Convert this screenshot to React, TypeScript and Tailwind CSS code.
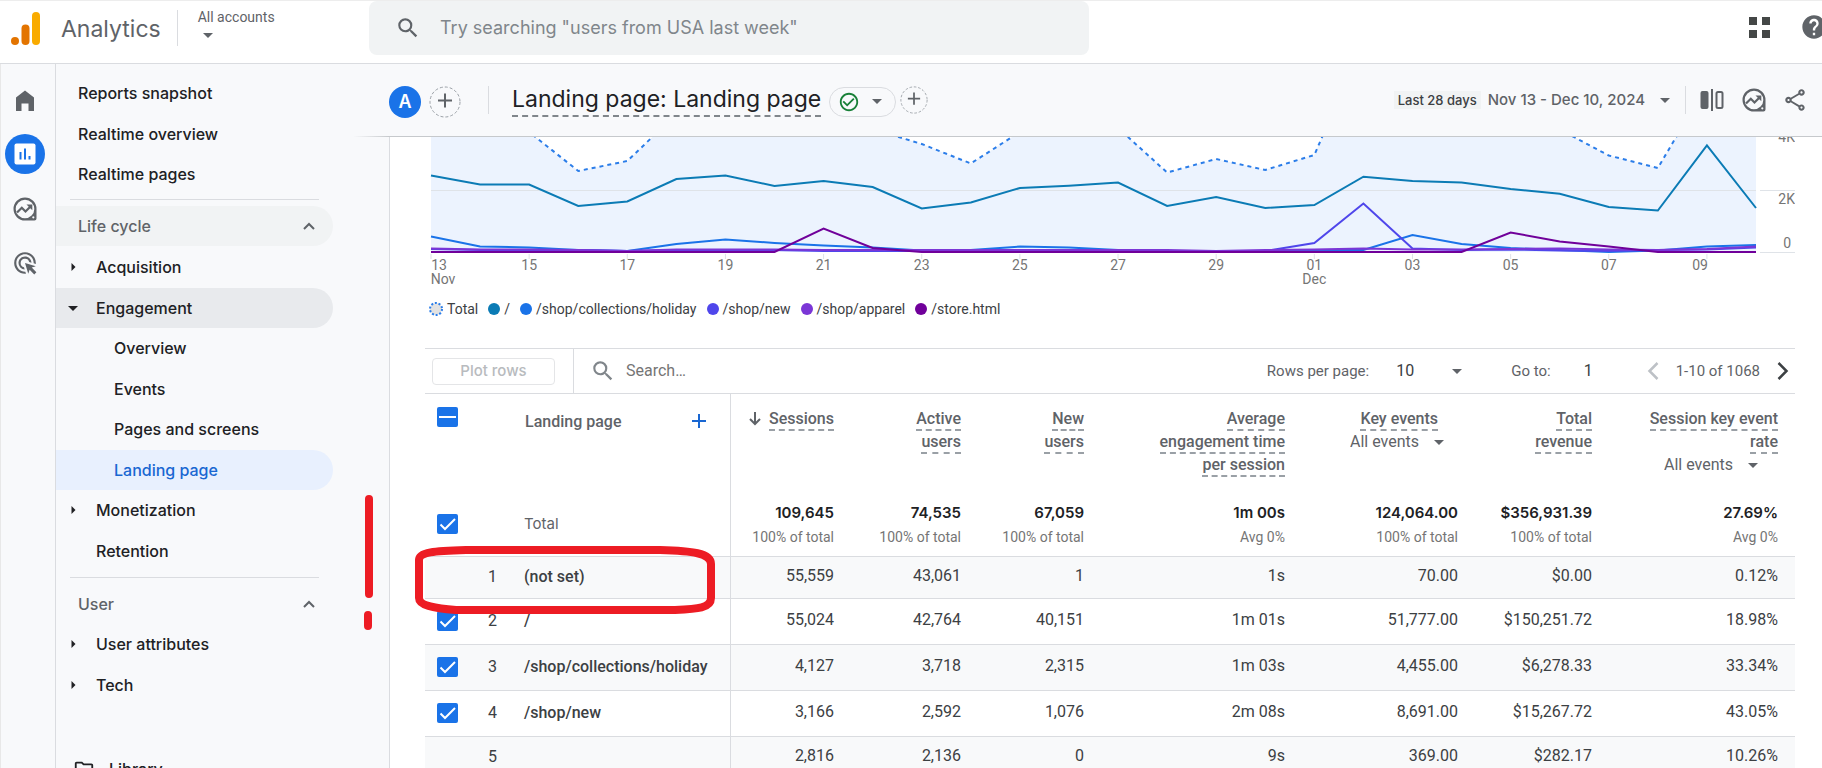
import React from "react";
import {
  MdAdsClick,
  MdCheckCircleOutline,
  MdHelp,
  MdOutlineFolder,
  MdOutlineShare,
  MdSearch,
} from "react-icons/md";

const GOOGLE = "font-[Inter,Roboto,sans-serif]";

function Caret({ className = "" }: { className?: string }) {
  return (
    <svg viewBox="0 0 10 5" className={`h-[5px] w-[10px] shrink-0 fill-current ${className}`} aria-hidden="true">
      <path d="M0 0h10L5 5z" />
    </svg>
  );
}

function SideCaret() {
  return (
    <svg viewBox="0 0 5 10" className="h-2 w-[5px] fill-[#202124]" aria-hidden="true">
      <path d="M0 0v10l5-5z" />
    </svg>
  );
}

function ChevronUp() {
  return (
    <svg viewBox="0 0 12 8" className="h-2 w-3 fill-none stroke-[#5f6368] stroke-2" aria-hidden="true">
      <path d="M1 7l5-5 5 5" />
    </svg>
  );
}

function ExploreIcon() {
  return (
    <svg viewBox="0 0 24 24" className="size-6" aria-hidden="true">
      <path
        fill="#5f6368"
        fillRule="evenodd"
        d="M12 .5A11.500 11.500 0 1 0 12 23.500H21.500a2 2 0 0 0 2-2V12A11.500 11.500 0 0 0 12 .5zM12 2.700a9.300 9.300 0 1 1 0 18.600a9.300 9.300 0 0 1 0-18.600zM20.300 19.200a1.100 1.100 0 1 0 .01 0z"
      />
      <path d="M4 15.500l4.800-4.700 3.700 3.700 5-5" fill="none" stroke="#5f6368" strokeWidth="2.200" />
      <path d="M13.500 7.500h5.800v5.800z" fill="#5f6368" />
    </svg>
  );
}

function AddCircle({ className, label }: { className: string; label: string }) {
  return (
    <button type="button" aria-label={label} className={`shrink-0 ${className}`}>
      <svg viewBox="0 0 32 32" className="size-full" aria-hidden="true">
        <circle cx="16" cy="16" r="15" fill="none" stroke="#9aa0a6" strokeDasharray="3 2" />
        <path d="M16 7.500v14M9 14.500h14" stroke="#5f6368" strokeWidth="2" />
      </svg>
    </button>
  );
}

function Logo() {
  return (
    <svg viewBox="0 0 30 34" className="h-[34px] w-[30px] shrink-0" aria-hidden="true">
      <circle cx="4" cy="29" r="4" fill="#e37400" />
      <rect x="10.500" y="12.500" width="8" height="20.500" rx="4" fill="#e37400" />
      <rect x="21" y="0" width="8" height="33" rx="4" fill="#f9ab00" />
    </svg>
  );
}

function TopBar() {
  return (
    <header className="flex h-16 shrink-0 items-start border-t border-b border-t-[#ededed] border-b-[#dadce0] bg-white">
      <div className="flex w-[369px] shrink-0 items-start pl-[11px]">
        <a href="#home" className="flex">
          <span className="pt-[11px]">
            <Logo />
          </span>
          <span className={`pt-[10px] pl-5 text-[23px] leading-9 text-[#5f6368] ${GOOGLE}`}>Analytics</span>
        </a>
        <div className="mt-[9px] ml-4 h-9 w-px bg-[#dadce0]" />
        <button type="button" className="mt-[6px] ml-5 text-left text-sm leading-5 text-[#5f6368]">
          All accounts
          <Caret className="mt-[6px] ml-[5px]" />
        </button>
      </div>
      <label className="flex h-[54px] w-[720px] items-center rounded-lg bg-[#f1f3f4] pl-[26px]">
        <MdSearch className="size-[26px] text-[#5f6368]" />
        <input
          type="search"
          aria-label="Search"
          placeholder={'Try searching "users from USA last week"'}
          className={`ml-[19px] flex-1 bg-transparent text-lg outline-none placeholder:text-[#80868b] ${GOOGLE}`}
        />
      </label>
      <button type="button" aria-label="Apps" className="mt-4 ml-auto grid grid-cols-2 gap-[5px]">
        {[0, 1, 2, 3].map((n) => (
          <span key={n} className="size-2 bg-[#444746]" />
        ))}
      </button>
      <button type="button" aria-label="Help" className="mt-3 -mr-[6px] ml-[30px]">
        <MdHelp className="size-7 text-[#5f6368]" />
      </button>
    </header>
  );
}

function Rail() {
  return (
    <nav aria-label="Sections" className="flex w-14 shrink-0 flex-col items-center border-x border-l-[#e8e8e8] border-r-[#dadce0] pt-[25px] pr-[7px]">
      <a href="#home" aria-label="Home">
        <svg viewBox="0 0 24 24" className="size-6 fill-[#5f6368]" aria-hidden="true">
          <path d="M3 22V8.500L12 1.500l9 7V22h-5.500v-7.500h-7V22z" />
        </svg>
      </a>
      <a href="#reports" aria-label="Reports" className="mt-[21px] flex size-10 items-center justify-center rounded-full bg-[#1a73e8]">
        <svg viewBox="0 0 22 22" className="size-[22px]" aria-hidden="true">
          <rect x="0.500" y="0.500" width="21" height="21" rx="2" fill="#fff" />
          <path d="M6.500 9v7.500M11 5.500v11M15.500 13v3.500" stroke="#1a73e8" strokeWidth="2" />
        </svg>
      </a>
      <a href="#explore" aria-label="Explore" className="mt-[23px]">
        <ExploreIcon />
      </a>
      <a href="#advertising" aria-label="Advertising" className="mt-[29px]">
        <MdAdsClick className="size-[26px] text-[#5f6368]" />
      </a>
    </nav>
  );
}

type NavItem = { label: string; level: 1 | 2 | 3; caret?: "right" | "down"; tone?: "open" | "active" };

const lifeCycle: NavItem[] = [
  { label: "Acquisition", level: 2, caret: "right" },
  { label: "Engagement", level: 2, caret: "down", tone: "open" },
  { label: "Overview", level: 3 },
  { label: "Events", level: 3 },
  { label: "Pages and screens", level: 3 },
  { label: "Landing page", level: 3, tone: "active" },
  { label: "Monetization", level: 2, caret: "right" },
  { label: "Retention", level: 2 },
];

const indent = { 1: "pl-[22px]", 2: "pl-10", 3: "pl-[58px]" };

function NavLink({ item }: { item: NavItem }) {
  const tone =
    item.tone === "open"
      ? "bg-[#e8eaed] text-[#202124]"
      : item.tone === "active"
        ? "bg-[#e8f0fe] text-[#1967d2]"
        : "text-[#202124]";
  return (
    <li className="odd:mb-px">
      <a href="#report" className={`relative flex h-10 items-center rounded-r-full ${indent[item.level]} ${tone}`}>
        {item.caret && (
          <span className="absolute left-3 flex w-[10px] justify-center">
            {item.caret === "right" ? <SideCaret /> : <Caret />}
          </span>
        )}
        {item.label}
      </a>
    </li>
  );
}

function SectionHead({ label, tone }: { label: string; tone: string }) {
  return (
    <button type="button" className={`flex h-10 w-full items-center justify-between rounded-r-full pr-[18px] pl-[22px] text-[#5f6368] ${tone}`}>
      {label}
      <ChevronUp />
    </button>
  );
}

function SideNav() {
  return (
    <nav aria-label="Reports" className={`w-[333px] shrink-0 overflow-hidden pt-[9px] pr-14 text-base font-medium ${GOOGLE}`}>
      <ul>
        <NavLink item={{ label: "Reports snapshot", level: 1 }} />
        <NavLink item={{ label: "Realtime overview", level: 1 }} />
        <NavLink item={{ label: "Realtime pages", level: 1 }} />
      </ul>
      <hr className="mt-[5px] mr-[14px] mb-[6px] ml-[14px] border-[#dadce0]" />
      <SectionHead label="Life cycle" tone="bg-[#f1f3f4]" />
      <ul className="mt-px">
        {lifeCycle.map((item) => (
          <NavLink key={item.label} item={item} />
        ))}
      </ul>
      <hr className="mt-[6px] mr-[14px] mb-[6px] ml-[14px] border-[#dadce0]" />
      <SectionHead label="User" tone="" />
      <ul>
        <NavLink item={{ label: "User attributes", level: 2, caret: "right" }} />
        <NavLink item={{ label: "Tech", level: 2, caret: "right" }} />
      </ul>
      <a href="#library" className="mt-11 flex h-10 items-center gap-[14px] pl-[17px] text-[#202124]">
        <MdOutlineFolder className="size-[22px]" />
        Library
      </a>
    </nav>
  );
}

function Toolbar() {
  return (
    <div className="relative flex h-[73px] shrink-0 items-center border-b border-[#c6c9cc] pr-[14px] pb-px text-[#5f6368]">
      <div className="absolute -bottom-px -left-9 h-px w-9 bg-linear-to-r from-transparent to-[#c6c9cc]" />
      <span className={`mt-1 flex size-8 items-center justify-center rounded-full bg-[#1a73e8] text-lg font-semibold text-white ${GOOGLE}`}>A</span>
      <AddCircle label="Add comparison" className="mt-1 ml-2 size-8" />
      <div className="ml-[27px] h-7 w-px bg-[#dadce0]" />
      <h1 className={`ml-[23px] border-b-2 border-dashed border-[#80868b] pt-px text-[23px] leading-8 whitespace-nowrap text-[#202124] ${GOOGLE}`}>
        Landing page: Landing page
      </h1>
      <button type="button" aria-label="Report status" className="mt-1 ml-2 flex h-[30px] w-[67px] items-center justify-between rounded-full border border-[#dadce0] pr-[13px] pl-[8px]">
        <MdCheckCircleOutline className="size-[22px] text-[#188038]" />
        <Caret />
      </button>
      <AddCircle label="Add filter" className="mt-px ml-1 size-7" />
      <div className="ml-auto flex items-center">
        <span className={`bg-[#f1f3f4] px-1 text-[13px] leading-[18px] font-medium text-[#3c4043] ${GOOGLE}`}>Last 28 days</span>
        <button type="button" className={`ml-[7px] flex items-center gap-[15px] pt-[2px] text-[15px] font-medium ${GOOGLE}`}>
          Nov 13 - Dec 10, 2024
          <Caret />
        </button>
        <div className="ml-[15px] h-7 w-px bg-[#dadce0]" />
        <button type="button" aria-label="Edit comparisons" className="ml-[14px]">
          <svg viewBox="0 0 24 24" className="size-6" aria-hidden="true">
            <rect x="0.500" y="3" width="8" height="18" rx="2" fill="#5f6368" />
            <path d="M12 1v22" stroke="#5f6368" strokeWidth="2" />
            <rect x="16.500" y="4" width="6" height="16" rx="1.500" fill="none" stroke="#5f6368" strokeWidth="2" />
          </svg>
        </button>
        <button type="button" aria-label="Insights" className="ml-[18px]">
          <ExploreIcon />
        </button>
        <button type="button" aria-label="Share" className="ml-4">
          <MdOutlineShare className="size-[26px]" />
        </button>
      </div>
    </div>
  );
}

const series: { name: string; color: string; y: number[] }[] = [
  {
    name: "/",
    color: "#0b7bb5",
    y: [39.5, 48.5, 48.5, 70, 65.5, 43, 39.5, 50, 45, 51, 72.5, 66.5, 52, 49.7, 46.5, 70, 61, 72, 69, 40.700, 45, 46.5, 53, 57.7, 71, 74.5, 9.5, 72],
  },
  {
    name: "/shop/collections/holiday",
    color: "#1a73e8",
    y: [100.5, 110.5, 111.5, 114, 115, 108, 103.5, 107, 109.5, 111.5, 114.5, 114, 110.5, 111.5, 114, 115, 115, 115, 114, 114, 99, 108, 112, 114, 116, 114.5, 110.5, 109],
  },
  {
    name: "/shop/new",
    color: "#4f46eb",
    y: [113, 114, 114, 114, 115, 114, 114, 114, 115, 115, 115, 115, 114, 114, 115, 115, 116, 115, 107, 67.5, 112.5, 114, 113.5, 114.5, 115, 114, 113.5, 111.5],
  },
  {
    name: "/shop/apparel",
    color: "#7b36d6",
    y: [112.5, 113.5, 113.5, 114, 115, 113.5, 113.5, 113.5, 114, 114, 114, 114, 114, 114, 114, 114, 115, 114, 113.5, 112.5, 113.5, 113.5, 113, 112.5, 113.5, 114, 113, 110.5],
  },
  {
    name: "/store.html",
    color: "#70009a",
    y: [116, 116, 116, 116, 116, 116, 116, 116, 92.5, 112, 116, 116, 116, 116, 116, 116, 116, 116, 116, 116, 116, 116, 96.5, 105.5, 110.5, 116, 116, 116],
  },
];

const totals = [-20, -15, -4, 35, 25, -22, -40, -35, -30, -7, 8, 27.5, -4, -12, -8, 36.5, 23, 34, 19, -94, -60, -50, -30, -6.5, 19.5, 32, -51, -16];

const STEP = 1325 / 27;
const toPoints = (ys: number[]) => ys.map((y, i) => `${6 + i * STEP},${y}`).join(" ");

function Chart() {
  const labels = ["13", "15", "17", "19", "21", "23", "25", "27", "29", "01", "03", "05", "07", "09"];
  return (
    <svg viewBox="0 1 1370 150" className="block w-full" role="img" aria-label="Sessions by landing page over time">
      <polygon points={`6,116 ${toPoints(totals)} 1331,116`} fill="#ecf3fe" />
      <path d="M6 54.500H1331M1335 54.500H1370M1335 116.500H1370" stroke="#dfe3e8" />
      <polyline points={toPoints(totals)} fill="none" stroke="#2b7de9" strokeWidth="2" strokeDasharray="4 4" />
      {series.map((s) => (
        <polyline key={s.name} points={toPoints(s.y)} fill="none" stroke={s.color} strokeWidth="2" />
      ))}
      <g fill="#757575" fontSize="14" textAnchor="middle">
        {labels.map((label, i) => {
          const x = 6 + i * 2 * STEP;
          const tx = i === 0 ? 14 : i === 13 ? 1275 : x;
          return (
            <g key={label}>
              <path d={`M${x} 118v5`} stroke="#dfe3e8" />
              <text x={tx} y="134">{label}</text>
              {label === "13" && <text x="18" y="148">Nov</text>}
              {label === "01" && <text x={tx} y="148">Dec</text>}
            </g>
          );
        })}
      </g>
      <g fill="#757575" fontSize="14" textAnchor="end">
        <text x="1370" y="6">4K</text>
        <text x="1370" y="68">2K</text>
        <text x="1366" y="112">0</text>
      </g>
    </svg>
  );
}

function Legend() {
  return (
    <ul className="mt-3 flex items-center pl-1 text-sm leading-5 text-[#3c4043]">
      <li className="mr-[10px] flex items-center gap-1">
        <svg viewBox="0 0 14 14" className="size-[14px]" aria-hidden="true">
          <circle cx="7" cy="7" r="6" fill="#e2e2e2" stroke="#2b7de9" strokeWidth="2" strokeDasharray="2 1.770" />
        </svg>
        Total
      </li>
      {series.map((s) => (
        <li key={s.name} className="mr-[10px] flex items-center gap-1">
          <svg viewBox="0 0 12 12" className="size-3" aria-hidden="true">
            <circle cx="6" cy="6" r="6" fill={s.color} />
          </svg>
          {s.name}
        </li>
      ))}
    </ul>
  );
}

function TableControls() {
  return (
    <div className="mt-[29px] flex h-[46px] items-center border-y border-[#dadce0] text-[15px] text-[#5f6368]">
      <button type="button" disabled className={`ml-[7px] h-[27px] w-[123px] rounded border border-[#e4e5e7] text-[15px] font-medium text-[#b8bbbe] ${GOOGLE}`}>
        Plot rows
      </button>
      <div className="ml-[18px] h-full w-px bg-[#dadce0]" />
      <label className="flex flex-1 items-center gap-[10px] pl-4">
        <MdSearch className="size-[26px] text-[#80868b]" />
        <input type="search" aria-label="Search rows" placeholder="Search…" className="flex-1 bg-transparent text-base outline-none placeholder:text-[#757575]" />
      </label>
      <label className="relative flex items-center gap-[27px]">
        Rows per page:
        <select defaultValue="10" className="w-[66px] appearance-none bg-transparent text-base text-[#3c4043]">
          <option>10</option>
          <option>25</option>
        </select>
        <Caret className="pointer-events-none absolute right-0" />
      </label>
      <label className="ml-[49px] flex items-center gap-3">
        Go to:
        <input type="text" defaultValue="1" className="w-[30px] bg-transparent text-right text-base text-[#3c4043]" />
      </label>
      <button type="button" aria-label="Previous page" disabled className="ml-[54px]">
        <svg viewBox="0 0 12 18" className="h-[18px] w-3 fill-none stroke-[#bdc1c6] stroke-[2.500]" aria-hidden="true">
          <path d="M10.500 1L2.500 9l8 8" />
        </svg>
      </button>
      <span className="ml-[17px]">1-10 of 1068</span>
      <button type="button" aria-label="Next page" className="mr-[6px] ml-[17px]">
        <svg viewBox="0 0 12 18" className="h-[18px] w-3 fill-none stroke-[#3c4043] stroke-[2.500]" aria-hidden="true">
          <path d="M1.500 1l8 8-8 8" />
        </svg>
      </button>
    </div>
  );
}

function Check({ label, mixed = false }: { label: string; mixed?: boolean }) {
  return (
    <span className="relative block h-5 w-[21px]">
      <input type="checkbox" defaultChecked aria-label={label} className="block h-5 w-[21px] appearance-none rounded-[2px] bg-[#1a73e8]" />
      <svg viewBox="0 0 21 20" className="pointer-events-none absolute inset-0 h-5 w-[21px] fill-none stroke-white stroke-2" aria-hidden="true">
        <path d={mixed ? "M2 10h17" : "M3.500 10.500l4.500 4.500 10-10"} />
      </svg>
    </span>
  );
}

function Metric({ lines }: { lines: string[] }) {
  return (
    <>
      {lines.map((line) => (
        <span key={line} className="block leading-[23px]">
          <span className="border-b-2 border-dashed border-[#9aa0a6] pb-px">{line}</span>
        </span>
      ))}
    </>
  );
}

function EventSelect({ label }: { label: string }) {
  return (
    <span className="relative inline-flex w-[94px] items-center">
      <select aria-label={label} className="w-full appearance-none bg-transparent text-base leading-6 font-normal text-[#5f6368]">
        <option>All events</option>
      </select>
      <Caret className="pointer-events-none absolute right-0" />
    </span>
  );
}

const totalsRow = [
  ["109,645", "100% of total"],
  ["74,535", "100% of total"],
  ["67,059", "100% of total"],
  ["1m 00s", "Avg 0%"],
  ["124,064.00", "100% of total"],
  ["$356,931.39", "100% of total"],
  ["27.69%", "Avg 0%"],
];

const rows = [
  { n: 1, page: "(not set)", checked: false, values: ["55,559", "43,061", "1", "1s", "70.00", "$0.00", "0.12%"] },
  { n: 2, page: "/", checked: true, values: ["55,024", "42,764", "40,151", "1m 01s", "51,777.00", "$150,251.72", "18.98%"] },
  { n: 3, page: "/shop/collections/holiday", checked: true, values: ["4,127", "3,718", "2,315", "1m 03s", "4,455.00", "$6,278.33", "33.34%"] },
  { n: 4, page: "/shop/new", checked: true, values: ["3,166", "2,592", "1,076", "2m 08s", "8,691.00", "$15,267.72", "43.05%"] },
  { n: 5, page: "", checked: false, values: ["2,816", "2,136", "0", "9s", "369.00", "$282.17", "10.26%"] },
];

function DataTable() {
  return (
    <table className="w-full table-fixed border-collapse text-base text-[#3c4043]">
      <colgroup>
        <col className="w-[305px]" />
        <col className="w-[121px]" />
        <col className="w-[127px]" />
        <col className="w-[123px]" />
        <col className="w-[201px]" />
        <col className="w-[173px]" />
        <col className="w-[134px]" />
        <col className="w-[186px]" />
      </colgroup>
      <thead>
        <tr className="h-[97px] text-right align-top text-[#5f6368]">
          <th className="border-r border-[#dadce0] p-0 pt-[13px] font-medium">
            <div className="flex items-start pl-3">
              <Check label="Select all rows" mixed />
              <span className="ml-[67px] pt-[3px] leading-6">Landing page</span>
              <button type="button" aria-label="Add dimension" className="mt-[7px] mr-6 ml-auto">
                <svg viewBox="0 0 14 14" className="size-[14px] stroke-[#1967d2] stroke-2" aria-hidden="true">
                  <path d="M7 0v14M0 7h14" />
                </svg>
              </button>
            </div>
          </th>
          <th className="p-0 pt-[13px] pr-[17px] font-medium">
            <span className="flex items-center justify-end gap-2">
              <svg viewBox="0 0 12 14" className="h-[14px] w-3 fill-none stroke-[#5f6368] stroke-2" aria-hidden="true">
                <path d="M6 0v12M1 7l5 5 5-5" />
              </svg>
              <span>
                <Metric lines={["Sessions"]} />
              </span>
            </span>
          </th>
          <th className="p-0 pt-[13px] pr-[17px] font-medium">
            <Metric lines={["Active", "users"]} />
          </th>
          <th className="p-0 pt-[13px] pr-[17px] font-medium">
            <Metric lines={["New", "users"]} />
          </th>
          <th className="p-0 pt-[13px] pr-[17px] font-medium">
            <Metric lines={["Average", "engagement time", "per session"]} />
          </th>
          <th className="p-0 pt-[13px] pr-[31px] font-medium">
            <div className="pr-[6px]">
              <Metric lines={["Key events"]} />
            </div>
            <EventSelect label="Key events filter" />
          </th>
          <th className="p-0 pt-[13px] pr-[17px] font-medium">
            <Metric lines={["Total", "revenue"]} />
          </th>
          <th className="p-0 pt-[13px] pr-[17px] font-medium">
            <Metric lines={["Session key event", "rate"]} />
            <div className="pr-5">
              <EventSelect label="Session key event rate filter" />
            </div>
          </th>
        </tr>
      </thead>
      <tbody>
        <tr className="h-[65px] border-b border-[#dadce0] text-right align-top">
          <th className="border-r border-[#dadce0] p-0 pt-[23px] font-normal">
            <div className="flex items-center pl-3">
              <Check label="Plot total" />
              <span className={`ml-[66px] text-[15px] leading-5 text-[#5f6368] ${GOOGLE}`}>Total</span>
            </div>
          </th>
          {totalsRow.map(([value, note], i) => (
            <td key={i} className="p-0 pt-[9px] pr-[17px]">
              <div className={`text-[15px] leading-[25px] font-semibold text-[#202124] ${GOOGLE}`}>{value}</div>
              <div className="text-sm leading-[25px] text-[#757575]">{note}</div>
            </td>
          ))}
        </tr>
        {rows.map((row) => (
          <tr key={row.n} className={`border-b border-[#dadce0] text-right odd:bg-white even:bg-[#f8f9fa] ${row.checked ? "h-[46px]" : "h-[42px]"}`}>
            <th className="border-r border-[#dadce0] p-0 font-medium">
              <div className="flex items-center pl-3">
                <span className="w-[21px]">{row.checked && <Check label={`Plot row ${row.n}`} />}</span>
                <span className="w-[39px] font-normal">{row.n}</span>
                <span className="ml-[27px]">{row.page}</span>
              </div>
            </th>
            {row.values.map((value, i) => (
              <td key={i} className="p-0 pr-[17px] pb-[2px]">
                {value}
              </td>
            ))}
          </tr>
        ))}
      </tbody>
    </table>
  );
}

function Annotations() {
  return (
    <svg viewBox="0 0 360 150" className="pointer-events-none absolute top-[490px] left-[360px] h-[150px] w-[360px] fill-none stroke-[#ed1c24] stroke-[8]" aria-hidden="true">
      <path d="M9 9V104M8 125V136" strokeLinecap="round" />
      <path d="M59 70C59 62 74 61 106 60H300C332 61 351 63 351 74V108C351 118 338 119 315 120H96C72 118 59 115 59 108Z" />
    </svg>
  );
}

export default function App() {
  return (
    <div className="relative flex h-screen flex-col overflow-hidden bg-[#f8f9fb] font-[Roboto,sans-serif]">
      <TopBar />
      <div className="flex min-h-0 flex-1">
        <Rail />
        <SideNav />
        <main className="flex min-w-0 flex-1 flex-col">
          <Toolbar />
          <div className="min-h-0 flex-1 overflow-hidden border-l border-[#dadce0] bg-white pr-[27px] pl-[35px]">
            <Chart />
            <Legend />
            <TableControls />
            <DataTable />
          </div>
        </main>
      </div>
      <Annotations />
    </div>
  );
}
